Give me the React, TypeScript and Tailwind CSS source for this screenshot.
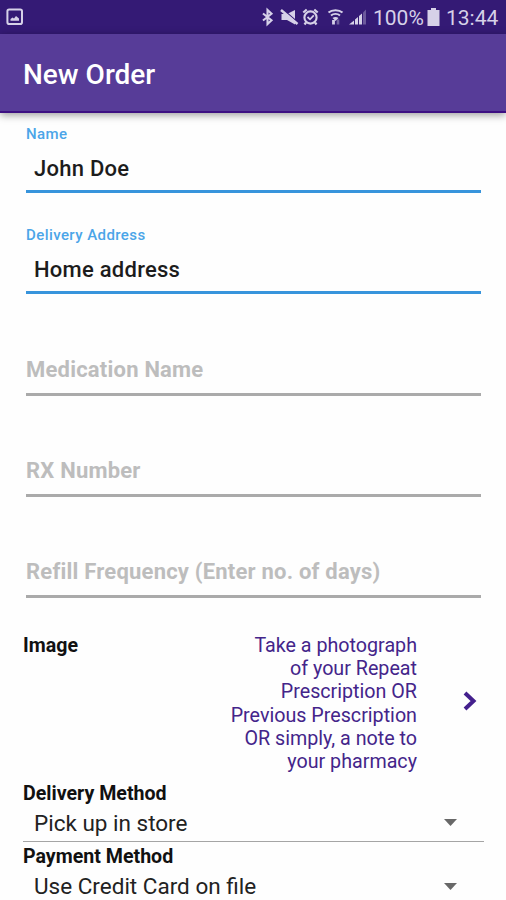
import clsx from "clsx";

const fields = [
  { id: "name", label: "Name", value: "John Doe" },
  { id: "address", label: "Delivery Address", value: "Home address" },
  { id: "medication", label: "Medication Name", value: "" },
  { id: "rx", label: "RX Number", value: "" },
  { id: "refill", label: "Refill Frequency (Enter no. of days)", value: "" },
];

const selects = [
  { id: "delivery", label: "Delivery Method", value: "Pick up in store" },
  { id: "payment", label: "Payment Method", value: "Use Credit Card on file" },
];

function StatusBar() {
  return (
    <div className="flex h-[34px] items-center bg-[#341a75] pl-1.5 text-[#d6d1e8]">
      <svg width="18" height="18" viewBox="0 0 18 18" fill="none">
        <rect x="1.4" y="1.4" width="14.6" height="14.6" rx="1.8" stroke="currentColor" strokeWidth="2" />
        <path d="M4.5 12.8V11L6.5 9.5L8 10.5L10 8L13 10.5V12.8Z" fill="currentColor" />
      </svg>
      <svg className="ml-auto" width="109" height="22" viewBox="0 0 109 22" fill="none" stroke="currentColor">
        {/* bluetooth */}
        <path d="M2 7.5L10.5 14.2L6.5 18V4L10.5 7.8L2 14.5" strokeWidth="2.1" />
        {/* muted speaker */}
        <path d="M20.5 8H26L34 4V18.5L26 14H20.5Z" fill="currentColor" stroke="none" />
        <path d="M21 2.5L37 16.5" stroke="#341a75" strokeWidth="1.3" />
        <path d="M20 4L36.5 18" strokeWidth="2.5" />
        {/* alarm */}
        <circle cx="49.5" cy="11.5" r="6.1" strokeWidth="2.1" />
        <path d="M42.3 6.5L45.7 3.5M56.7 6.5L53.3 3.5M45 16.5L43.5 18.5M54 16.5L55.5 18.5" strokeWidth="2.2" />
        <path d="M46.5 11L49 13.3L52.8 9.3" strokeWidth="1.7" />
        {/* wifi */}
        <path d="M67.5 6.5C71 3.4 78 3.4 81.5 6.5" strokeWidth="2" />
        <path d="M70 9.5C72.5 7.3 76.5 7.3 79 9.5" strokeWidth="1.9" />
        <path d="M71.5 12C73.5 10.6 75.5 10.6 77.5 12L74.5 15Z" fill="currentColor" stroke="none" />
        <path d="M72.5 14V18.5" strokeWidth="2.8" />
        <path d="M77 13.5V18.5" strokeWidth="2.6" opacity=".4" />
        {/* signal */}
        <path d="M88 18.5L93 14.5V18.5ZM94 13.5L97 11V18.5H94ZM98 10L101 7.5V18.5H98Z" fill="currentColor" stroke="none" />
        <path d="M102 6.5L105 3.5V18.5H102Z" fill="currentColor" stroke="none" opacity=".35" />
      </svg>
      <span className="ml-[3px] w-[54px] whitespace-nowrap pt-px text-[21px] leading-[34px]">100%</span>
      <svg width="13" height="18" viewBox="0 0 12 18" fill="currentColor">
        <path d="M3.5 0H8.5V2H12V18H0V2H3.5Z" />
      </svg>
      <span className="ml-[6px] w-[60px] whitespace-nowrap pt-px text-[21px] leading-[34px]">13:44</span>
    </div>
  );
}

function Field({ label, value }: { label: string; value: string }) {
  return (
    <div
      className={clsx(
        "flex h-[101.2px] flex-col justify-end",
        value ? "text-[#1c1c1c]" : "text-[#bdbdbd]"
      )}
    >
      {value && (
        <span className="pt-px text-[15px] leading-[18px] font-medium tracking-[0.42px] text-[#4ba5e8]">
          {label}
        </span>
      )}
      <div
        className={clsx(
          "border-b-[3px] text-[22px] leading-[30px]",
          value
            ? "mt-[9px] h-[41px] border-[#3794dc] pt-0.5 pl-2 font-medium tracking-[0.25px]"
            : "h-[42px] border-[#aaaaaa] pt-px font-bold tracking-[0.21px]"
        )}
      >
        {value || label}
      </div>
    </div>
  );
}

function Select({ label, value }: { label: string; value: string }) {
  return (
    <div className="h-[63.3px]">
      <div className="h-[24px] pt-px text-[19.6px] leading-[24px] font-bold text-[#111]">{label}</div>
      <div className="flex h-[37px] items-center justify-between border-b border-[#a5a5a5] pr-[27px] pl-[11px]">
        <span className="text-[22.5px] leading-[34px] text-[#222]">{value}</span>
        <svg width="13" height="7" viewBox="0 0 13 7" fill="#686868">
          <path d="M0 0H13L6.5 7Z" />
        </svg>
      </div>
    </div>
  );
}

export default function App() {
  return (
    <div className="h-[900px] w-[506px] overflow-hidden bg-[#fefefe] font-['Roboto',sans-serif]">
      <StatusBar />
      <header className="flex h-[79px] items-center border-b-2 border-[#3d0f82] bg-[#573c98] pt-[5px] pl-[23px] shadow-[0_2px_8px_rgba(0,0,0,0.4)]">
        <h1 className="text-[28px] leading-8 font-medium text-white">New Order</h1>
      </header>

      <main>
        <div className="-mt-[21px] px-[26px] pr-[25px]">
          {fields.map((field) => (
            <Field key={field.id} label={field.label} value={field.value} />
          ))}
        </div>

        <div className="mt-[35px] flex h-[148px] pr-[29px] pl-[23px]">
          <span className="pt-px text-[19.6px] leading-[24px] font-bold text-[#111]">Image</span>
          <p className="mt-px ml-auto w-[200px] text-right text-[19.7px] leading-[23.2px] text-[#44258a]">
            Take a photograph
            <br />
            of your Repeat
            <br />
            Prescription OR
            <br />
            Previous Prescription
            <br />
            OR simply, a note to
            <br />
            your pharmacy
          </p>
          <svg className="mt-[58px] ml-[46px]" width="14" height="20" viewBox="0 0 14 20" fill="none">
            <path d="M2 2L10.5 10L2 18" stroke="#44208d" strokeWidth="4" />
          </svg>
        </div>

        <div className="pr-[22px] pl-[23px]">
          {selects.map((item) => (
            <Select key={item.id} label={item.label} value={item.value} />
          ))}
        </div>
      </main>
    </div>
  );
}
